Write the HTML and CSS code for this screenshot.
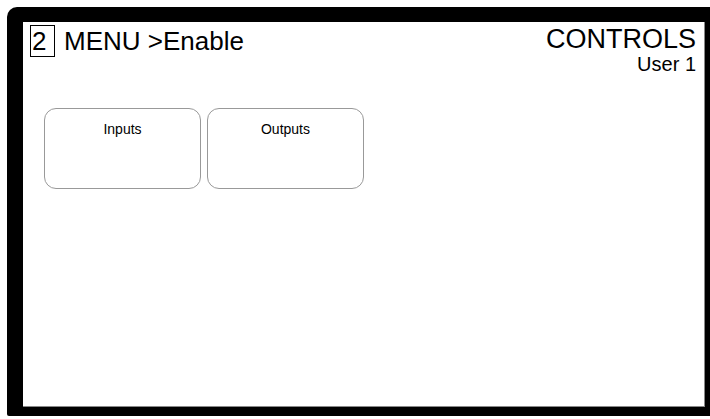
FILE: index.html
```html
<!DOCTYPE html>
<html>
<head>
<meta charset="utf-8">
<link rel="stylesheet" href="styles.css">
</head>
<body>
<div class="frame">
  <div class="screen">
    <div class="header">
      <div class="title">
        <span class="num">2</span>
        <span class="menu">MENU &gt;Enable</span>
      </div>
      <div class="right">
        <div class="controls">CONTROLS</div>
        <div class="user">User 1</div>
      </div>
    </div>
    <div class="buttons">
      <div class="btn">Inputs</div>
      <div class="btn">Outputs</div>
    </div>
  </div>
</div>
</body>
</html>
```
FILE: styles.css
```css
html, body {
  margin: 0;
  padding: 0;
  background: #ffffff;
  overflow: hidden;
}
body {
  padding: 7px 0 0 7px;
  font-family: "Liberation Sans", Arial, sans-serif;
  color: #000;
}
.frame {
  width: 703px;
  box-sizing: border-box;
  height: 409px;
  background: #000;
  border-radius: 10px 0 0 2px;
  padding: 15px 5px 9px 16px;
}
.screen {
  background: #fff;
  height: 100%;
  box-sizing: border-box;
  border-right: 1px solid #888;
  border-bottom: 1px solid #888;
  padding: 3px 8px 0 7px;
}
.header {
  display: flex;
  justify-content: space-between;
  align-items: flex-start;
}
.title {
  display: flex;
  align-items: center;
}
.num {
  box-sizing: border-box;
  width: 25px;
  height: 32px;
  border: 1px solid #000;
  font-size: 26px;
  line-height: 30px;
  padding-left: 1px;
}
.menu {
  font-size: 26px;
  line-height: 32px;
  margin-left: 9px;
}
.right {
  display: flex;
  flex-direction: column;
  align-items: flex-end;
}
.controls {
  font-size: 27px;
  line-height: 28px;
}
.user {
  font-size: 20px;
  line-height: 22px;
}
.buttons {
  display: flex;
  gap: 6px;
  margin: 33px 0 0 14px;
}
.btn {
  width: 157px;
  height: 81px;
  box-sizing: border-box;
  border: 1px solid #999;
  border-radius: 12px;
  text-align: center;
  font-size: 14px;
  padding-top: 12px;
}
```
